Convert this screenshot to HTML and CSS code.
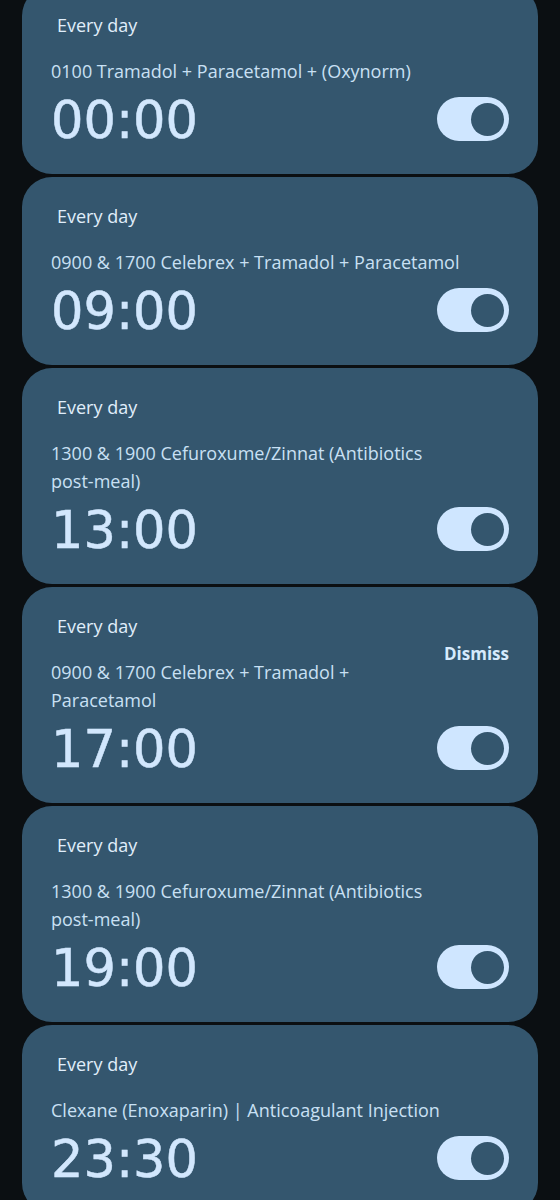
FILE: index.html
```html
<!DOCTYPE html>
<html lang="en">
<head>
  <meta charset="UTF-8" />
  <meta name="viewport" content="width=device-width, initial-scale=1" />
  <title>Alarms</title>
  <link rel="stylesheet" href="styles.css">
</head>
<body>

  <div class="alarm-list">

    <div class="alarm-card">
      <div class="alarm-head">
        <div class="alarm-info">
          <div class="repeat">Every day</div>
          <div class="label">0100 Tramadol + Paracetamol + (Oxynorm)</div>
        </div>
      </div>
      <div class="alarm-row">
        <div class="time">00:00</div>
        <div class="toggle on"><span class="thumb"></span></div>
      </div>
    </div>

    <div class="alarm-card">
      <div class="alarm-head">
        <div class="alarm-info">
          <div class="repeat">Every day</div>
          <div class="label">0900 &amp; 1700 Celebrex + Tramadol + Paracetamol</div>
        </div>
      </div>
      <div class="alarm-row">
        <div class="time">09:00</div>
        <div class="toggle on"><span class="thumb"></span></div>
      </div>
    </div>

    <div class="alarm-card">
      <div class="alarm-head">
        <div class="alarm-info">
          <div class="repeat">Every day</div>
          <div class="label">1300 &amp; 1900 Cefuroxume/Zinnat (Antibiotics <span class="nowrap">post-meal)</span></div>
        </div>
      </div>
      <div class="alarm-row">
        <div class="time">13:00</div>
        <div class="toggle on"><span class="thumb"></span></div>
      </div>
    </div>

    <div class="alarm-card">
      <div class="alarm-head">
        <div class="alarm-info">
          <div class="repeat">Every day</div>
          <div class="label">0900 &amp; 1700 Celebrex + Tramadol + Paracetamol</div>
        </div>
        <button class="dismiss">Dismiss</button>
      </div>
      <div class="alarm-row">
        <div class="time">17:00</div>
        <div class="toggle on"><span class="thumb"></span></div>
      </div>
    </div>

    <div class="alarm-card">
      <div class="alarm-head">
        <div class="alarm-info">
          <div class="repeat">Every day</div>
          <div class="label">1300 &amp; 1900 Cefuroxume/Zinnat (Antibiotics <span class="nowrap">post-meal)</span></div>
        </div>
      </div>
      <div class="alarm-row">
        <div class="time">19:00</div>
        <div class="toggle on"><span class="thumb"></span></div>
      </div>
    </div>

    <div class="alarm-card">
      <div class="alarm-head">
        <div class="alarm-info">
          <div class="repeat">Every day</div>
          <div class="label">Clexane (Enoxaparin) | Anticoagulant Injection</div>
        </div>
      </div>
      <div class="alarm-row">
        <div class="time">23:30</div>
        <div class="toggle on"><span class="thumb"></span></div>
      </div>
    </div>

  </div>

</body>
</html>
```

FILE: styles.css
```css
body {
  font-family: 'Open Sans', 'Noto Sans', sans-serif;
  background: #0b0f12;
  margin: 0;
  padding: 0;
}

.alarm-list {
  display: flex;
  flex-direction: column;
  gap: 3px;
  margin: -14px 22px 0;
}

.alarm-card {
  background: #34566e;
  border-radius: 30px;
  padding: 25px 29px 25px 29px;
}

.alarm-head {
  display: flex;
  align-items: flex-start;
  gap: 16px;
}

.alarm-info {
  flex: 1;
  min-width: 0;
}

.repeat {
  font-size: 18px;
  line-height: 28px;
  color: #e0eefb;
  padding-left: 6px;
}

.label {
  max-width: 438px;
  margin-top: 18px;
  font-size: 18px;
  line-height: 28px;
  color: #c9e0f4;
}

.nowrap {
  white-space: nowrap;
}

.dismiss {
  margin-top: 30px;
  padding: 0;
  background: none;
  border: none;
  font-family: inherit;
  font-size: 17px;
  font-weight: 700;
  line-height: 24px;
  color: #d6eafc;
}

.alarm-row {
  display: flex;
  align-items: center;
  justify-content: space-between;
  margin-top: 4px;
  height: 60px;
}

.time {
  font-family: 'DejaVu Sans', sans-serif;
  font-size: 51px;
  line-height: 60px;
  padding-top: 4px;
  color: #d2e7fd;
  -webkit-text-stroke: 0.5px #d2e7fd;
}

.toggle {
  width: 72px;
  height: 44px;
  border-radius: 22px;
  background: #cfe6ff;
  display: flex;
  align-items: center;
  justify-content: flex-end;
  padding: 0 5px;
  box-sizing: border-box;
}

.toggle .thumb {
  width: 33px;
  height: 33px;
  border-radius: 50%;
  background: #34566e;
}
```
